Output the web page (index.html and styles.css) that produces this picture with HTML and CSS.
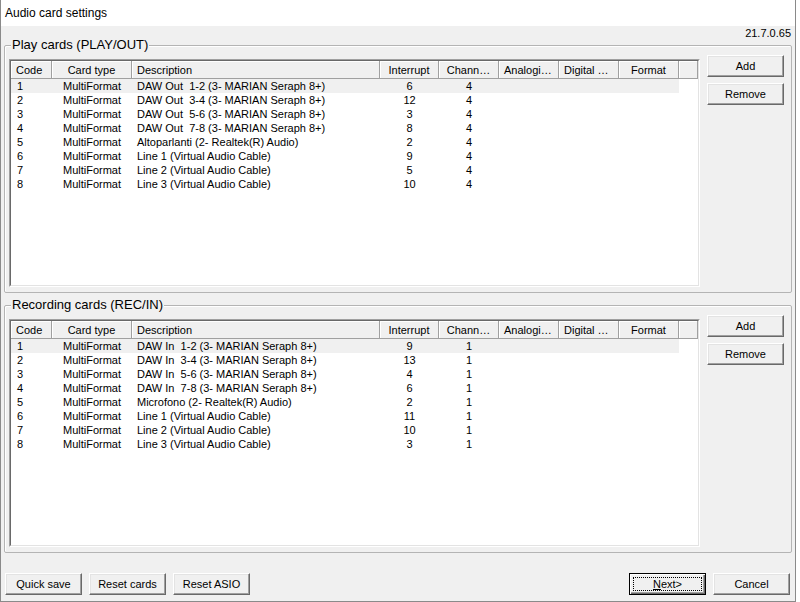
FILE: index.html
```html
<!DOCTYPE html>
<html lang="en">
<head>
  <meta charset="UTF-8" />
  <title>Audio card settings</title>
  <link rel="stylesheet" href="styles.css">
</head>
<body>
  <div class="window">
    <div class="titlebar">Audio card settings</div>
    <div class="client">
      <div class="version">21.7.0.65</div>

      <div class="group">
        <span class="group-label">Play cards (PLAY/OUT)</span>
        <div class="list">
          <div class="list-inner">
            <table class="cards">
              <colgroup>
                <col class="c-code"><col class="c-type"><col class="c-desc"><col class="c-irq">
                <col class="c-std"><col class="c-std"><col class="c-std"><col class="c-std"><col class="c-fill">
              </colgroup>
              <thead>
                <tr>
                  <th class="left">Code</th><th>Card type</th><th class="left">Description</th><th>Interrupt</th>
                  <th>Chann…</th><th class="left">Analogi…</th><th class="left">Digital …</th><th>Format</th><th></th>
                </tr>
              </thead>
              <tbody>
                <tr class="sel"><td>1</td><td class="center">MultiFormat</td><td>DAW Out  1-2 (3- MARIAN Seraph 8+)</td><td class="center">6</td><td class="center">4</td><td></td><td></td><td></td><td class="fill"></td></tr>
                <tr><td>2</td><td class="center">MultiFormat</td><td>DAW Out  3-4 (3- MARIAN Seraph 8+)</td><td class="center">12</td><td class="center">4</td><td></td><td></td><td></td><td class="fill"></td></tr>
                <tr><td>3</td><td class="center">MultiFormat</td><td>DAW Out  5-6 (3- MARIAN Seraph 8+)</td><td class="center">3</td><td class="center">4</td><td></td><td></td><td></td><td class="fill"></td></tr>
                <tr><td>4</td><td class="center">MultiFormat</td><td>DAW Out  7-8 (3- MARIAN Seraph 8+)</td><td class="center">8</td><td class="center">4</td><td></td><td></td><td></td><td class="fill"></td></tr>
                <tr><td>5</td><td class="center">MultiFormat</td><td>Altoparlanti (2- Realtek(R) Audio)</td><td class="center">2</td><td class="center">4</td><td></td><td></td><td></td><td class="fill"></td></tr>
                <tr><td>6</td><td class="center">MultiFormat</td><td>Line 1 (Virtual Audio Cable)</td><td class="center">9</td><td class="center">4</td><td></td><td></td><td></td><td class="fill"></td></tr>
                <tr><td>7</td><td class="center">MultiFormat</td><td>Line 2 (Virtual Audio Cable)</td><td class="center">5</td><td class="center">4</td><td></td><td></td><td></td><td class="fill"></td></tr>
                <tr><td>8</td><td class="center">MultiFormat</td><td>Line 3 (Virtual Audio Cable)</td><td class="center">10</td><td class="center">4</td><td></td><td></td><td></td><td class="fill"></td></tr>
              </tbody>
            </table>
          </div>
        </div>
        <div class="side-buttons">
          <button class="btn">Add</button>
          <button class="btn">Remove</button>
        </div>
      </div>

      <div class="group group-rec">
        <span class="group-label">Recording cards (REC/IN)</span>
        <div class="list">
          <div class="list-inner">
            <table class="cards">
              <colgroup>
                <col class="c-code"><col class="c-type"><col class="c-desc"><col class="c-irq">
                <col class="c-std"><col class="c-std"><col class="c-std"><col class="c-std"><col class="c-fill">
              </colgroup>
              <thead>
                <tr>
                  <th class="left">Code</th><th>Card type</th><th class="left">Description</th><th>Interrupt</th>
                  <th>Chann…</th><th class="left">Analogi…</th><th class="left">Digital …</th><th>Format</th><th></th>
                </tr>
              </thead>
              <tbody>
                <tr class="sel"><td>1</td><td class="center">MultiFormat</td><td>DAW In  1-2 (3- MARIAN Seraph 8+)</td><td class="center">9</td><td class="center">1</td><td></td><td></td><td></td><td class="fill"></td></tr>
                <tr><td>2</td><td class="center">MultiFormat</td><td>DAW In  3-4 (3- MARIAN Seraph 8+)</td><td class="center">13</td><td class="center">1</td><td></td><td></td><td></td><td class="fill"></td></tr>
                <tr><td>3</td><td class="center">MultiFormat</td><td>DAW In  5-6 (3- MARIAN Seraph 8+)</td><td class="center">4</td><td class="center">1</td><td></td><td></td><td></td><td class="fill"></td></tr>
                <tr><td>4</td><td class="center">MultiFormat</td><td>DAW In  7-8 (3- MARIAN Seraph 8+)</td><td class="center">6</td><td class="center">1</td><td></td><td></td><td></td><td class="fill"></td></tr>
                <tr><td>5</td><td class="center">MultiFormat</td><td>Microfono (2- Realtek(R) Audio)</td><td class="center">2</td><td class="center">1</td><td></td><td></td><td></td><td class="fill"></td></tr>
                <tr><td>6</td><td class="center">MultiFormat</td><td>Line 1 (Virtual Audio Cable)</td><td class="center">11</td><td class="center">1</td><td></td><td></td><td></td><td class="fill"></td></tr>
                <tr><td>7</td><td class="center">MultiFormat</td><td>Line 2 (Virtual Audio Cable)</td><td class="center">10</td><td class="center">1</td><td></td><td></td><td></td><td class="fill"></td></tr>
                <tr><td>8</td><td class="center">MultiFormat</td><td>Line 3 (Virtual Audio Cable)</td><td class="center">3</td><td class="center">1</td><td></td><td></td><td></td><td class="fill"></td></tr>
              </tbody>
            </table>
          </div>
        </div>
        <div class="side-buttons">
          <button class="btn">Add</button>
          <button class="btn">Remove</button>
        </div>
      </div>

      <div class="footer">
        <button class="btn">Quick save</button>
        <button class="btn">Reset cards</button>
        <button class="btn">Reset ASIO</button>
        <span class="spacer"></span>
        <button class="btn btn-default"><span class="focus"><u>N</u>ext&gt;</span></button>
        <button class="btn">Cancel</button>
      </div>
    </div>
  </div>
</body>
</html>
```

FILE: styles.css
```css
body {
  margin: 0;
  background: #fff;
  font-family: "Liberation Sans", Arial, sans-serif;
  font-size: 11px;
  color: #000;
}

.window {
  width: 796px;
  height: 602px;
  box-sizing: border-box;
  border: 1px solid #8a8a8a;
  border-top: none;
  display: flex;
  flex-direction: column;
  background: #f0f0f0;
}

.titlebar {
  height: 26px;
  line-height: 26px;
  padding-left: 4px;
  background: #fff;
  font-size: 12px;
}

.client {
  flex: 1;
  padding: 0 3px;
}

.version {
  height: 19px;
  line-height: 14px;
  text-align: right;
  padding-right: 1px;
}

.group {
  position: relative;
  height: 248px;
  box-sizing: border-box;
  border: 1px solid #b4b4b4;
  box-shadow: inset 1px 1px #fff;
  border-radius: 2px;
  padding: 10px 7px 5px 4px;
  display: flex;
  align-items: flex-start;
}

.group-rec {
  margin-top: 12px;
}

.group-label {
  position: absolute;
  top: -10px;
  left: 6px;
  padding: 0 1px;
  background: #f0f0f0;
  font-size: 13px;
  line-height: 17px;
}

.list {
  margin-top: 3px;
  width: 691px;
  height: 228px;
  box-sizing: border-box;
  border: 1px solid;
  border-color: #a0a0a0 #fff #fff #a0a0a0;
}

.list-inner {
  height: 100%;
  box-sizing: border-box;
  border: 1px solid;
  border-color: #696969 #e3e3e3 #e3e3e3 #696969;
  background: #fff;
  overflow: hidden;
}

.cards {
  width: 687px;
  table-layout: fixed;
  border-collapse: separate;
  border-spacing: 0;
}

.c-code { width: 41px; }
.c-type { width: 80px; }
.c-desc { width: 248px; }
.c-irq { width: 59px; }
.c-std { width: 60px; }
.c-fill { width: 19px; }

.cards th {
  height: 18px;
  box-sizing: border-box;
  padding: 0 5px;
  background: #f0f0f0;
  border-right: 1px solid #a0a0a0;
  border-bottom: 1px solid #a0a0a0;
  box-shadow: inset 1px 1px #fff;
  font-weight: normal;
  text-align: center;
  white-space: nowrap;
  overflow: hidden;
  line-height: 16px;
}

.cards th.left {
  text-align: left;
}

.cards td {
  height: 14px;
  padding: 0 0 0 5px;
  line-height: 14px;
  white-space: pre;
  overflow: hidden;
}

.cards td:first-child {
  padding-left: 6px;
}

.cards td.center {
  text-align: center;
  padding: 0;
}

.cards tr.sel td {
  background: #f0f0f0;
}

.cards tr.sel td.fill {
  background: #fff;
}

.side-buttons {
  margin-left: 7px;
  margin-top: -1px;
  display: flex;
  flex-direction: column;
  gap: 6px;
}

.btn {
  width: 77px;
  height: 22px;
  box-sizing: border-box;
  padding: 0;
  background: #f0f0f0;
  border: 1px solid;
  border-color: #fff #696969 #696969 #fff;
  box-shadow: inset -1px -1px #a0a0a0, inset 1px 1px #e3e3e3;
  font-family: "Liberation Sans", Arial, sans-serif;
  font-size: 11px;
  color: #000;
}

.footer {
  margin-top: 20px;
  padding: 0 2px 0 1px;
  display: flex;
  gap: 7px;
}

.spacer {
  flex: 1;
}

.btn-default {
  border: 1px solid #000;
  box-shadow: inset 1px 1px #fff, inset -1px -1px #696969, inset -2px -2px #a0a0a0;
  padding: 3px;
}

.btn-default .focus {
  display: block;
  height: 100%;
  box-sizing: border-box;
  border: 1px dotted #000;
  line-height: 12px;
}
```
